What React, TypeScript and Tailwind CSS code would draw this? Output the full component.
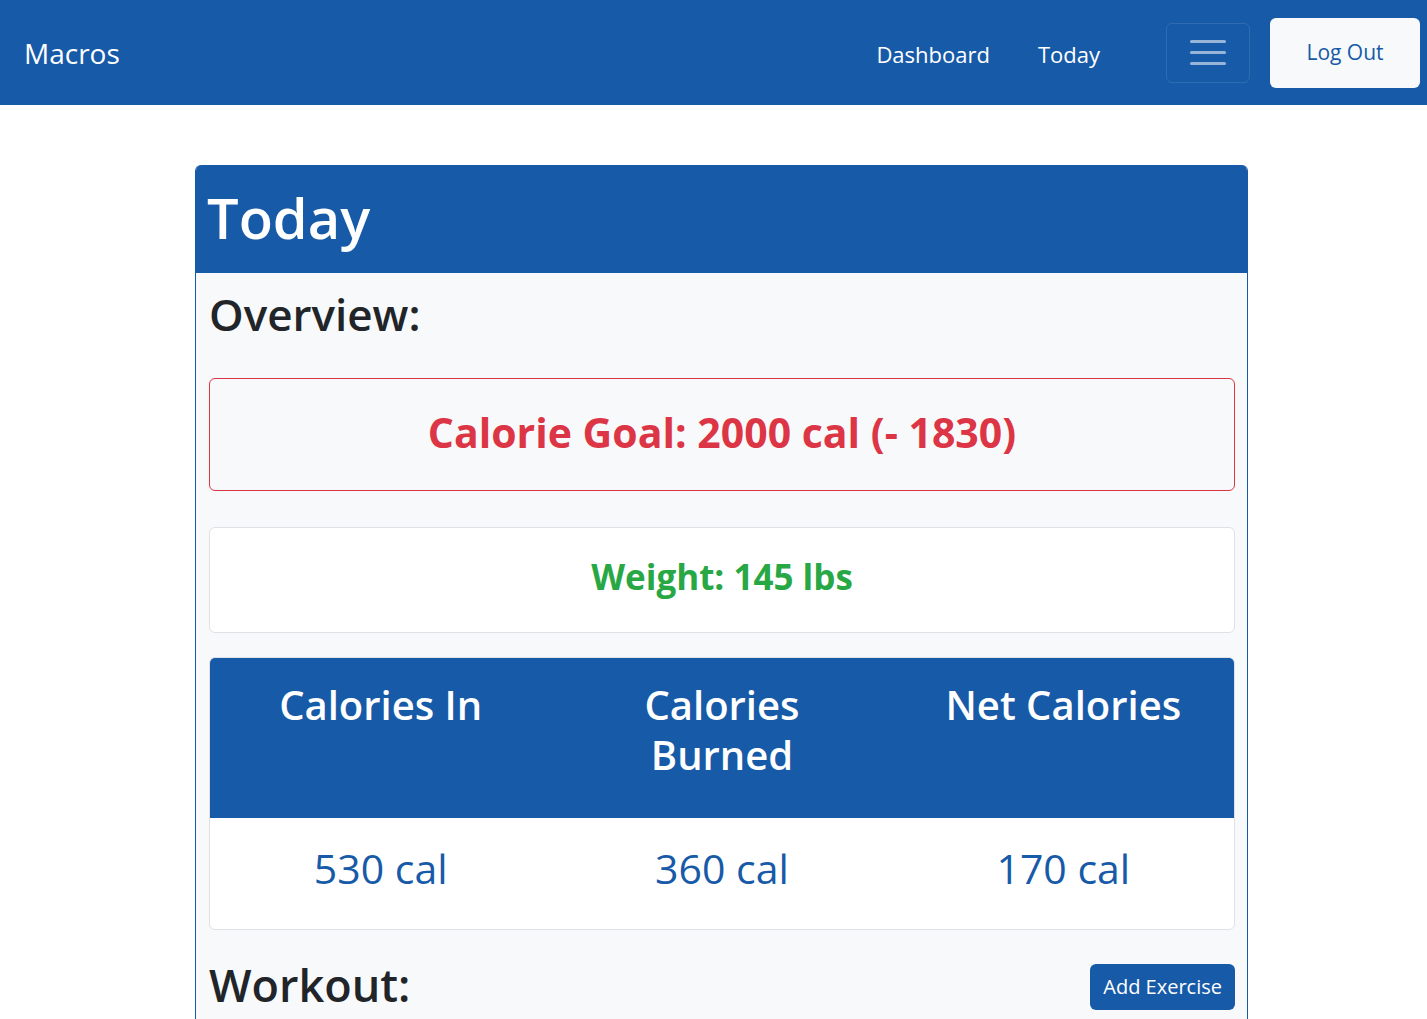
function App() {
  const stats = [
    { label: 'Calories In', value: '530 cal' },
    { label: 'Calories Burned', value: '360 cal' },
    { label: 'Net Calories', value: '170 cal' },
  ];

  return (
    <div className="min-h-screen bg-white" style={{ fontFamily: '"Open Sans", "Noto Sans", sans-serif' }}>
      {/* Navbar */}
      <nav className="h-[105px] bg-[#175aa8] flex items-center pl-6 pr-[7px]">
        <span className="text-[28px] text-white">Macros</span>
        <div className="ml-auto flex items-center">
          <a className="text-[22px] text-white mr-[48px] pt-[3px]">Dashboard</a>
          <a className="text-[22px] text-white mr-[66px] pt-[3px]">Today</a>
          <button className="w-[84px] h-[60px] rounded-md border border-white/10 flex flex-col items-center justify-center gap-[8px]">
            <span className="block w-[36px] h-[3px] bg-white/55 rounded"></span>
            <span className="block w-[36px] h-[3px] bg-white/55 rounded"></span>
            <span className="block w-[36px] h-[3px] bg-white/55 rounded"></span>
          </button>
          <button className="ml-[20px] w-[150px] h-[70px] rounded-md bg-[#f8f9fa] text-[#175aa8] text-[21px]">Log Out</button>
        </div>
      </nav>

      {/* Card */}
      <div className="mt-[60px] ml-[195px] w-[1053px] rounded-t-md overflow-hidden border-x border-[#175aa8]">
        <div className="h-[108px] bg-[#175aa8] flex items-center px-[11px]">
          <h1 className="text-[56px] font-semibold text-white leading-none pb-[4px]">Today</h1>
        </div>
        <div className="bg-[#f8f9fa] pl-[13px] pr-[12px] pb-10">
          <h2 className="text-[44px] font-semibold text-[#212529] pt-[15px] leading-[1.2]">Overview:</h2>

          <div className="mt-[37px] h-[113px] border border-[#dc3545] rounded-md flex items-center justify-center">
            <span className="text-[41px] font-bold text-[#dc3545] pb-[4px]">Calorie Goal: 2000 cal (- 1830)</span>
          </div>

          <div className="mt-[36px] h-[106px] bg-white border border-[#dee2e6] rounded-md flex items-center justify-center">
            <span className="text-[35px] font-bold text-[#28a745] pb-[6px]">Weight: 145 lbs</span>
          </div>

          <div className="mt-[24px] rounded-md overflow-hidden border border-[#dee2e6] bg-white">
            <div className="grid grid-cols-3 bg-[#175aa8] h-[160px] pt-[22px]">
              {stats.map((s) => (
                <div key={s.label} className="text-center text-white text-[40px] font-semibold leading-[1.25] px-[20px]">
                  {s.label === 'Calories Burned' ? (<>Calories<br />Burned</>) : s.label}
                </div>
              ))}
            </div>
            <div className="grid grid-cols-3 h-[111px] items-center">
              {stats.map((s) => (
                <div key={s.value} className="text-center text-[#175aa8] text-[41px] pb-[10px]">{s.value}</div>
              ))}
            </div>
          </div>

          <div className="mt-[28px] flex items-center justify-between">
            <h2 className="text-[45px] font-semibold text-[#212529] leading-[1.2]">Workout:</h2>
            <button className="h-[46px] px-[13px] rounded-md bg-[#175aa8] text-white text-[20px] mt-[4px]">Add Exercise</button>
          </div>
        </div>
      </div>
    </div>
  );
}

export default App
